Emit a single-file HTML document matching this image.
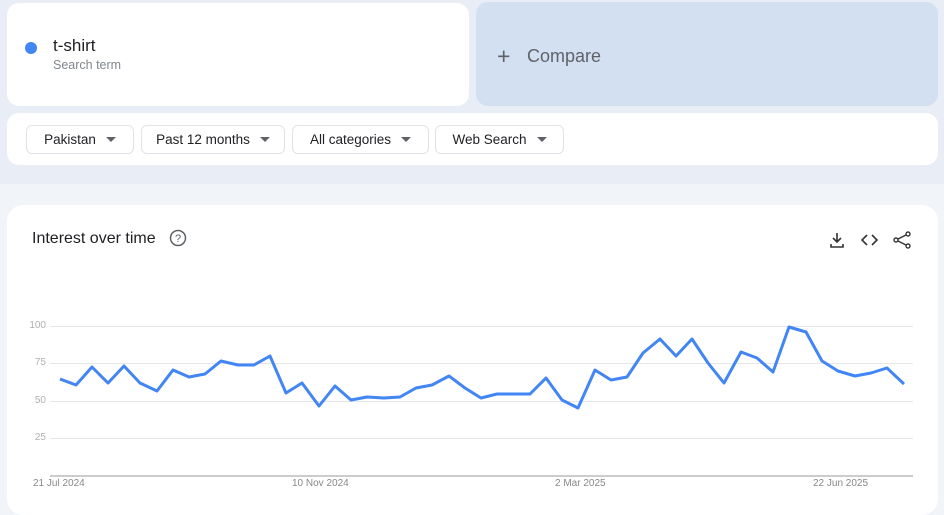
<!DOCTYPE html>
<html><head><meta charset="utf-8"><style>
*{box-sizing:border-box;margin:0;padding:0}
body{width:944px;height:504px;overflow:hidden;background:#f1f4f9;font-family:"Liberation Sans",sans-serif;position:relative}
.top{position:absolute;left:0;top:0;width:944px;height:184px;background:#e8edf6}
.card{position:absolute;background:#fff;border-radius:12px}
.cmp{position:absolute;left:476px;top:2px;width:462px;height:104px;background:#d2e0f2;border-radius:12px}
.btn{position:absolute;top:125px;height:29px;border:1px solid #e0e3e8;border-radius:6px;font-size:13.5px;color:#202124;display:flex;align-items:center;justify-content:center;gap:10px}
.tri{width:0;height:0;border-left:5px solid transparent;border-right:5px solid transparent;border-top:5px solid #5f6368}
.yl{position:absolute;font-size:10px;color:#b0b0b0;width:20px;text-align:right;left:26px}
.xl{position:absolute;top:478px;font-size:10px;color:#888}
</style></head><body>
<div class="top"></div>
<div class="card" style="left:7px;top:3px;width:462px;height:103px"></div>
<div style="position:absolute;left:25px;top:42px;width:12px;height:12px;border-radius:50%;background:#4285f4"></div>
<div style="position:absolute;left:53px;top:36px;font-size:17px;color:#202124">t-shirt</div>
<div style="position:absolute;left:53px;top:58px;font-size:12.5px;color:#80868b">Search term</div>
<div class="cmp"></div>
<div style="position:absolute;left:497px;top:43px;font-size:23px;color:#5f6368;font-weight:300">+</div>
<div style="position:absolute;left:527px;top:46px;font-size:18px;color:#5f6368">Compare</div>
<div class="card" style="left:7px;top:113px;width:931px;height:52px"></div>
<div class="btn" style="left:26px;width:108px">Pakistan <span class="tri"></span></div>
<div class="btn" style="left:141px;width:144px">Past 12 months <span class="tri"></span></div>
<div class="btn" style="left:292px;width:137px">All categories <span class="tri"></span></div>
<div class="btn" style="left:435px;width:129px">Web Search <span class="tri"></span></div>
<div class="card" style="left:7px;top:205px;width:931px;height:310px;border-radius:16px"></div>
<div style="position:absolute;left:32px;top:230px;font-size:16px;color:#202124">Interest over time</div>
<svg style="position:absolute;left:169px;top:229px" width="18" height="18" viewBox="0 0 18 18"><circle cx="9" cy="9" r="7.5" fill="none" stroke="#5f6368" stroke-width="1.5"/><text x="9" y="13" font-size="11" text-anchor="middle" fill="#5f6368" font-family="Liberation Sans">?</text></svg>
<svg style="position:absolute;left:828px;top:230px" width="84" height="20" viewBox="0 0 84 20">
<path d="M9 3v9M5 8l4 4 4-4M3 14v3h12v-3" fill="none" stroke="#333" stroke-width="1.6"/>
<path d="M39 5l-5 5 5 5M44 5l5 5-5 5" fill="none" stroke="#333" stroke-width="1.6"/>
<circle cx="80" cy="4" r="2" fill="none" stroke="#333" stroke-width="1.4"/><circle cx="68" cy="10" r="2" fill="none" stroke="#333" stroke-width="1.4"/><circle cx="80" cy="16" r="2" fill="none" stroke="#333" stroke-width="1.4"/>
<path d="M70 9l8-4M70 11l8 4" stroke="#333" stroke-width="1.4"/></svg>
<div class="yl" style="top:320px">100</div>
<div class="yl" style="top:357px">75</div>
<div class="yl" style="top:395px">50</div>
<div class="yl" style="top:432px">25</div>
<svg style="position:absolute;left:0;top:0" width="944" height="504">
<g stroke="#e6e6e6" stroke-width="1"><line x1="50" x2="913" y1="326.5" y2="326.5"/><line x1="50" x2="913" y1="363.5" y2="363.5"/><line x1="50" x2="913" y1="401.5" y2="401.5"/><line x1="50" x2="913" y1="438.5" y2="438.5"/></g>
<line x1="50" x2="913" y1="476" y2="476" stroke="#bbb" stroke-width="1.5"/>
<polyline fill="none" stroke="#4285f4" stroke-width="3" stroke-linejoin="round" points="60,379 76,385 92,367 108,383 124,366 140,383 157,391 173,370 189,377 205,374 221,361 238,365 254,365 270,356 286,393 302,383 319,406 335,386 351,400 367,397 384,398 400,397 416,388 432,385 449,376 465,388 481,398 497,394 513,394 530,394 546,378 562,400 578,408 595,370 611,380 627,377 643,353 660,339 676,356 692,339 708,363 724,383 741,352 757,358 773,372 789,327 806,332 822,361 838,371 855,376 871,373 887,368 904,384"/>
</svg>
<div class="xl" style="left:33px">21 Jul 2024</div>
<div class="xl" style="left:292px">10 Nov 2024</div>
<div class="xl" style="left:555px">2 Mar 2025</div>
<div class="xl" style="left:813px">22 Jun 2025</div>
</body></html>
